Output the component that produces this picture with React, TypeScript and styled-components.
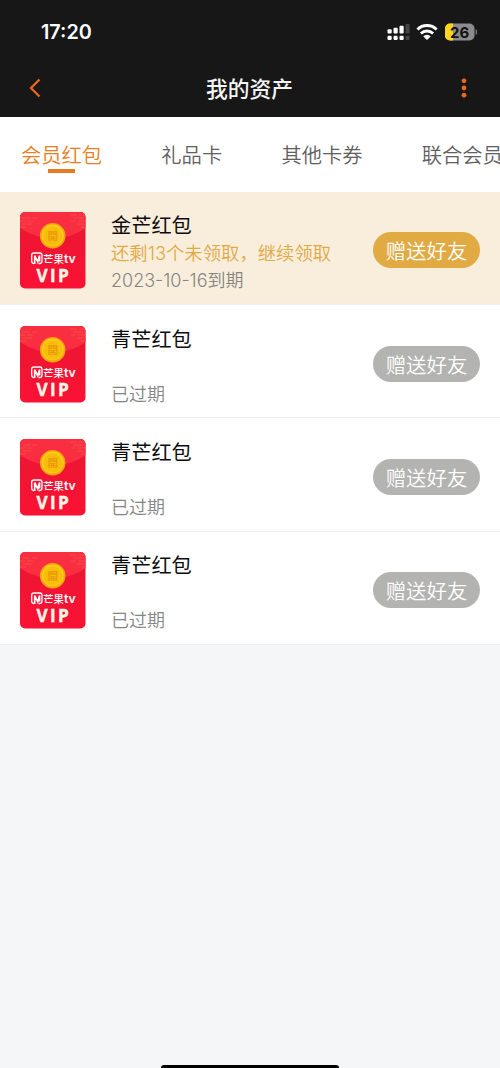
import React from 'react';
import styled, { createGlobalStyle } from 'styled-components';

const GlobalStyle = createGlobalStyle`
  * { box-sizing: border-box; }
  body {
    margin: 0;
    background: #f4f6f8;
    font-family: Inter, "Noto Sans CJK SC", sans-serif;
    overflow: hidden;
  }
`;

const Page = styled.div`
  display: flex;
  flex-direction: column;
  width: 500px;
  height: 1068px;
  overflow: hidden;
  background: #f4f6f8;
`;

const Header = styled.header`
  height: 117.4px;
  background: #171717;
  color: #fff;
`;

const StatusBar = styled.div`
  display: flex;
  align-items: center;
  justify-content: space-between;
  height: 60px;
  padding: 4px 22px 0 41px;
`;

const Clock = styled.span`
  font-size: 19.8px;
  font-weight: 600;
  line-height: 24px;
`;

const StatusIcons = styled.div`
  display: flex;
  align-items: center;
`;

const NavBar = styled.div`
  display: flex;
  align-items: center;
  justify-content: space-between;
  height: 56px;
  padding: 0 24px 0 23px;
`;

const NavTitle = styled.h1`
  margin: 0;
  padding-top: 1px;
  font-size: 21.8px;
  font-weight: 500;
  line-height: 30px;
  color: #f4f4f4;
`;

const IconButton = styled.button`
  display: flex;
  align-items: center;
  justify-content: center;
  width: 24px;
  height: 30px;
  padding: 0;
  border: 0;
  background: none;
`;

const Tabs = styled.nav`
  display: flex;
  flex: none;
  gap: 59.2px;
  height: 74.4px;
  padding: 24px 0 0 21px;
  overflow: hidden;
  background: #fff;
`;

const Tab = styled.div<{ $active?: boolean }>`
  display: flex;
  flex: none;
  flex-direction: column;
  align-items: center;
  font-size: 20.3px;
  font-weight: 350;
  line-height: 30px;
  white-space: nowrap;
  color: ${(p) => (p.$active ? '#e67e22' : '#606060')};

  &::after {
    content: '';
    width: 27px;
    height: 4px;
    margin-top: -2px;
    background: ${(p) => (p.$active ? '#e67c22' : 'transparent')};
  }
`;

const List = styled.main`
  display: flex;
  flex-direction: column;
`;

const Row = styled.article<{ $highlight?: boolean }>`
  display: flex;
  height: 113.3px;
  padding: 20.7px 20px 0;
  border-bottom: 1.5px solid #eceef1;
  background: ${(p) => (p.$highlight ? '#f9eedb' : '#fff')};
`;

const Details = styled.div`
  display: flex;
  flex: 1;
  flex-direction: column;
  margin-left: 25px;
  padding-top: 1px;
  white-space: nowrap;
`;

const Name = styled.div`
  height: 26px;
  font-size: 20.2px;
  line-height: 26px;
  color: #0c0c0c;
`;

const Remaining = styled.div`
  height: 28px;
  font-size: 18.35px;
  font-weight: 350;
  line-height: 28px;
  color: #dfa945;
`;

const Expiry = styled.div`
  height: 28px;
  font-size: 18px;
  font-weight: 350;
  line-height: 27px;
  color: #858585;
`;

const GiftButton = styled.button<{ $active?: boolean }>`
  flex: none;
  width: 107px;
  height: 36px;
  margin-top: 20px;
  padding: 0;
  border: 0;
  border-radius: 18px;
  font: 350 20.4px/36px "Noto Sans CJK SC", sans-serif;
  color: #fff;
  background: ${(p) => (p.$active ? '#e1aa42' : '#b3b3b2')};
`;

const HomeIndicator = styled.div`
  width: 178px;
  height: 3px;
  margin: auto auto 0 161px;
  border-radius: 3px 3px 0 0;
  background: #000;
`;

const SignalIcon = () => (
  <svg width="23" height="18" viewBox="0 0 23 18" fill="#fff">
    <rect x="0.5" y="6.3" width="4.2" height="4.2" rx="1" />
    <rect x="6.5" y="4.7" width="4.2" height="5.8" rx="1" />
    <rect x="12.5" y="2.8" width="4.2" height="7.7" rx="1" />
    <rect x="18.4" y="1" width="4.2" height="9.5" rx="1" fill="#444" />
    <rect x="0.5" y="12.7" width="4.2" height="4.2" rx="1.2" />
    <rect x="6.5" y="12.7" width="4.2" height="4.2" rx="1.2" />
    <rect x="12.5" y="12.7" width="4.2" height="4.2" rx="1.2" />
    <rect x="18.4" y="12.7" width="4.2" height="4.2" rx="1.2" fill="#444" />
  </svg>
);

const WifiIcon = () => (
  <svg width="22" height="17" viewBox="0 0 22 17" fill="none" stroke="#fff" style={{ marginLeft: 6.5 }}>
    <path d="M1.4 5.5A13.7 13.7 0 0 1 20.6 5.5" strokeWidth="3" />
    <path d="M4.9 9.5A8.7 8.7 0 0 1 17.1 9.5" strokeWidth="2.8" />
    <path d="M11 16 7.3 12.4A5 5 0 0 1 14.7 12.4Z" fill="#fff" stroke="none" />
  </svg>
);

const BatteryIcon = () => (
  <svg width="33" height="18" viewBox="0 0 33 18" style={{ marginLeft: 7 }}>
    <clipPath id="battery">
      <rect x="0" y="0.5" width="29.5" height="17" rx="5" />
    </clipPath>
    <g clipPath="url(#battery)">
      <rect width="30" height="18" fill="#8b8b8d" />
      <rect width="8" height="18" fill="#fcd61c" />
    </g>
    <path d="M31 6.5Q32.5 9 31 11.5Z" fill="#8b8b8d" stroke="#8b8b8d" strokeWidth=".6" />
    <text x="14.6" y="14.5" textAnchor="middle" fontFamily="Inter" fontSize="15" fontWeight="700" fill="#111">26</text>
  </svg>
);

const Envelope = () => (
  <svg width="66" height="77" viewBox="0 0 66 77" style={{ flex: 'none' }}>
    <defs>
      <clipPath id="card"><rect x="0" y="0" width="65.5" height="76.5" rx="5" /></clipPath>
      <linearGradient id="body" x2="0" y2="1">
        <stop stopColor="#e81832" />
        <stop offset="1" stopColor="#fb1134" />
      </linearGradient>
    </defs>
    <g clipPath="url(#card)">
      <rect width="66" height="77" fill="url(#body)" />
      <path d="M0 0H66V16Q50 26.5 33 26.5T0 16Z" fill="#f92f41" />
      <g stroke="#f46a4d" strokeWidth=".8" opacity=".6" fill="none">
        <path d="M2 6h8m2 0h5M0 9h5m2 0h6M3 12h9M0 15h6" />
        <path d="M50 3h7m2 0h6M53 6h11M51 9h5m2 0h8M57 12h7M61 15h5" />
      </g>
    </g>
    <circle cx="32.7" cy="23.8" r="12.8" fill="#f5a60d" />
    <circle cx="32.7" cy="23.5" r="11" fill="#fbcd1b" />
    <circle cx="32.7" cy="24" r="9.7" fill="#f9bd0b" />
    <text x="32.7" y="27.7" textAnchor="middle" fontFamily="Noto Sans CJK SC" fontSize="10.5" fontWeight="700" fill="#e99a05">開</text>
    <path d="M14 51.5Q11.7 51.5 11.7 49V43Q11.7 41 14 41H20Q22 41 22 43.5V49Q22 51.5 19.5 51.5H18.5" fill="none" stroke="#fff" strokeWidth="1.3" />
    <path d="M14.7 52V43.7L17.7 49.8 19.6 43.5V49.5" fill="none" stroke="#fff" strokeWidth="1.6" />
    <text x="23.2" y="51.2" fontFamily="Noto Sans CJK SC" fontSize="10.3" fontWeight="500" fill="#fff">芒果</text>
    <text x="44" y="51" fontFamily="Inter" fontSize="12.2" fontWeight="600" fill="#fff">tv</text>
    <text x="16.6" y="69.8" fontFamily="Open Sans" fontSize="17.2" fontWeight="700" fill="#fff4e6" stroke="#fff4e6" strokeWidth=".4" letterSpacing="2.3">VIP</text>
  </svg>
);

const tabs = ['会员红包', '礼品卡', '其他卡券', '联合会员'];

const packets = [
  { name: '金芒红包', remaining: '还剩13个未领取，继续领取', expiry: '2023-10-16到期', active: true },
  { name: '青芒红包', remaining: '', expiry: '已过期', active: false },
  { name: '青芒红包', remaining: '', expiry: '已过期', active: false },
  { name: '青芒红包', remaining: '', expiry: '已过期', active: false },
];

export default function App() {
  return (
    <Page>
      <GlobalStyle />
      <Header>
        <StatusBar>
          <Clock>17:20</Clock>
          <StatusIcons>
            <SignalIcon />
            <WifiIcon />
            <BatteryIcon />
          </StatusIcons>
        </StatusBar>
        <NavBar>
          <IconButton aria-label="返回">
            <svg width="12" height="20" viewBox="0 0 12 20" fill="none" stroke="#ee651b" strokeWidth="2.3">
              <path d="M10.5 1.5 2 10l8.5 8.5" />
            </svg>
          </IconButton>
          <NavTitle>我的资产</NavTitle>
          <IconButton aria-label="更多">
            <svg width="6" height="20" viewBox="0 0 6 20" fill="#ee651b">
              <circle cx="3" cy="2.8" r="2.4" />
              <circle cx="3" cy="10" r="2.4" />
              <circle cx="3" cy="17.2" r="2.4" />
            </svg>
          </IconButton>
        </NavBar>
      </Header>
      <Tabs>
        {tabs.map((label, i) => (
          <Tab key={label} $active={i === 0}>{label}</Tab>
        ))}
      </Tabs>
      <List>
        {packets.map((p, i) => (
          <Row key={i} $highlight={p.active}>
            <Envelope />
            <Details>
              <Name>{p.name}</Name>
              <Remaining>{p.remaining}</Remaining>
              <Expiry>{p.expiry}</Expiry>
            </Details>
            <GiftButton $active={p.active}>赠送好友</GiftButton>
          </Row>
        ))}
      </List>
      <HomeIndicator />
    </Page>
  );
}
